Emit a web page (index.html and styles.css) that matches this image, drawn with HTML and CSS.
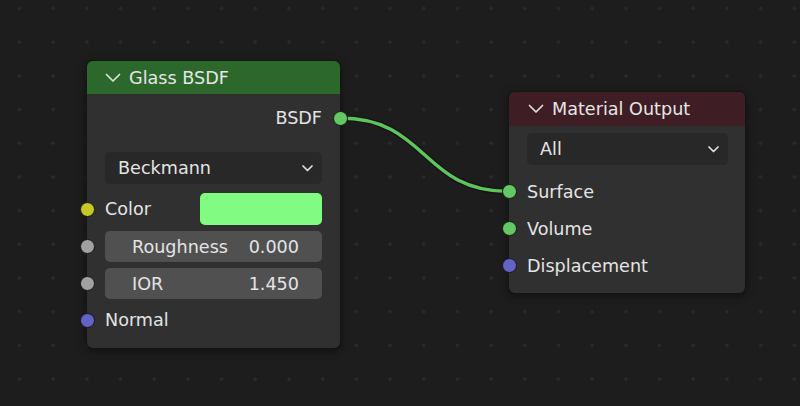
FILE: index.html
```html
<!DOCTYPE html>
<html>
<head>
<meta charset="utf-8">
<link rel="stylesheet" href="styles.css">
</head>
<body>
<div class="canvas">
  <svg class="links" width="800" height="406" viewBox="0 0 800 406">
    <path class="link-outline" d="M340 118 C 428 118, 421 191.5, 509 191.5"/>
    <path class="link" d="M340 118 C 428 118, 421 191.5, 509 191.5"/>
  </svg>

  <div class="node node-glass">
    <div class="node-header header-green">
      <svg class="chev-lg" width="16" height="10" viewBox="0 0 16 10"><polyline points="1.5,1.5 8,8 14.5,1.5"/></svg>
      <span>Glass BSDF</span>
    </div>
    <div class="node-body">
      <div class="row row-out">
        <span>BSDF</span>
        <i class="sock sock-out sock-green"></i>
      </div>
      <div class="dropdown dd-glass">
        <span>Beckmann</span>
        <svg class="chev-sm" width="11" height="7" viewBox="0 0 11 7"><polyline points="1,1 5.5,5.5 10,1"/></svg>
      </div>
      <div class="row row-color">
        <i class="sock sock-in sock-yellow"></i>
        <span>Color</span>
        <div class="swatch"></div>
      </div>
      <div class="row row-field">
        <i class="sock sock-in sock-grey"></i>
        <div class="field"><span>Roughness</span><span>0.000</span></div>
      </div>
      <div class="row row-field">
        <i class="sock sock-in sock-grey"></i>
        <div class="field"><span>IOR</span><span>1.450</span></div>
      </div>
      <div class="row row-in row-last">
        <i class="sock sock-in sock-blue"></i>
        <span>Normal</span>
      </div>
    </div>
  </div>

  <div class="node node-output">
    <div class="node-header header-red">
      <svg class="chev-lg" width="16" height="10" viewBox="0 0 16 10"><polyline points="1.5,1.5 8,8 14.5,1.5"/></svg>
      <span>Material Output</span>
    </div>
    <div class="node-body body-output">
      <div class="dropdown dd-output">
        <span>All</span>
        <svg class="chev-sm" width="11" height="7" viewBox="0 0 11 7"><polyline points="1,1 5.5,5.5 10,1"/></svg>
      </div>
      <div class="row row-in row-first">
        <i class="sock sock-in sock-green"></i>
        <span>Surface</span>
      </div>
      <div class="row row-in">
        <i class="sock sock-in sock-green"></i>
        <span>Volume</span>
      </div>
      <div class="row row-in">
        <i class="sock sock-in sock-blue"></i>
        <span>Displacement</span>
      </div>
    </div>
  </div>
</div>
</body>
</html>
```

FILE: styles.css
```css
html, body {
  margin: 0;
  padding: 0;
}
body {
  width: 800px;
  height: 406px;
  overflow: hidden;
  background-color: #1d1d1d;
  font-family: "DejaVu Sans", "Liberation Sans", sans-serif;
  font-size: 17.6px;
  color: #e4e4e4;
}
.canvas {
  position: relative;
  width: 800px;
  height: 406px;
  background-color: #1d1d1d;
  background-image: radial-gradient(circle at center, #2b2b2b 0, #2b2b2b 1.3px, rgba(43,43,43,0) 2.1px);
  background-size: 33.7px 33.7px;
  background-position: 2.65px -8.35px;
}
.links {
  position: absolute;
  left: 0;
  top: 0;
  z-index: 0;
  pointer-events: none;
}
.link-outline {
  fill: none;
  stroke: #151515;
  stroke-width: 6;
}
.link {
  fill: none;
  stroke: #5ec45e;
  stroke-width: 3.4;
}
.node {
  position: absolute;
  background: #303030;
  border-radius: 6px;
  box-shadow: 0 0 0 1px #151515, 0 2px 8px rgba(0,0,0,0.55);
  z-index: 1;
}
.node-glass {
  left: 87px;
  top: 61px;
  width: 253px;
}
.node-output {
  left: 509px;
  top: 92px;
  width: 236px;
}
.node-header {
  display: flex;
  align-items: center;
  height: 33px;
  border-radius: 6px 6px 0 0;
  padding-left: 18px;
  gap: 8px;
  color: #e6e6e6;
}
.header-green {
  background: #2c682c;
}
.header-red {
  background: #3f1d25;
  height: 34px;
  padding-left: 19px;
}
.chev-lg polyline, .chev-sm polyline {
  fill: none;
  stroke: #e0e0e0;
  stroke-width: 1.7;
  stroke-linecap: round;
  stroke-linejoin: round;
}
.node-body {
  display: flex;
  flex-direction: column;
  padding: 6px 0 13px 0;
}
.body-output {
  padding: 7px 0 9px 0;
}
.row {
  position: relative;
  display: flex;
  align-items: center;
  padding: 0 18px;
}
.row-out {
  height: 36px;
  justify-content: flex-end;
}
.row-color {
  margin-top: 9px;
  height: 32px;
}
.row-field {
  margin-top: 6px;
  height: 31px;
}
.row-in {
  height: 37px;
}
.row-last {
  margin-top: 6px;
  height: 30px;
}
.row-first {
  margin-top: 8px;
}
.sock {
  position: absolute;
  top: 50%;
  width: 13px;
  height: 13px;
  margin-top: -7.5px;
  border-radius: 50%;
  border: 1px solid #161616;
}
.sock-out {
  right: -7.5px;
}
.sock-in {
  left: -7.5px;
}
.sock-green { background: #63c763; }
.sock-yellow { background: #c7c729; }
.sock-grey { background: #a1a1a1; }
.sock-blue { background: #6363c7; }
.dropdown {
  display: flex;
  align-items: center;
  justify-content: space-between;
  height: 32px;
  box-sizing: border-box;
  background: #282828;
  border-radius: 5px;
  padding: 0 9px 0 13px;
}
.dd-glass {
  margin: 16px 18px 0 18px;
}
.dd-output {
  margin: 0 17px 0 18px;
}
.swatch {
  margin-left: auto;
  width: 122px;
  height: 32px;
  border-radius: 5px;
  background: #82fb82;
}
.field {
  flex: 1;
  display: flex;
  align-items: center;
  justify-content: space-between;
  height: 31px;
  background: #505050;
  border-radius: 5px;
  padding: 0 23px 0 27px;
}
```
